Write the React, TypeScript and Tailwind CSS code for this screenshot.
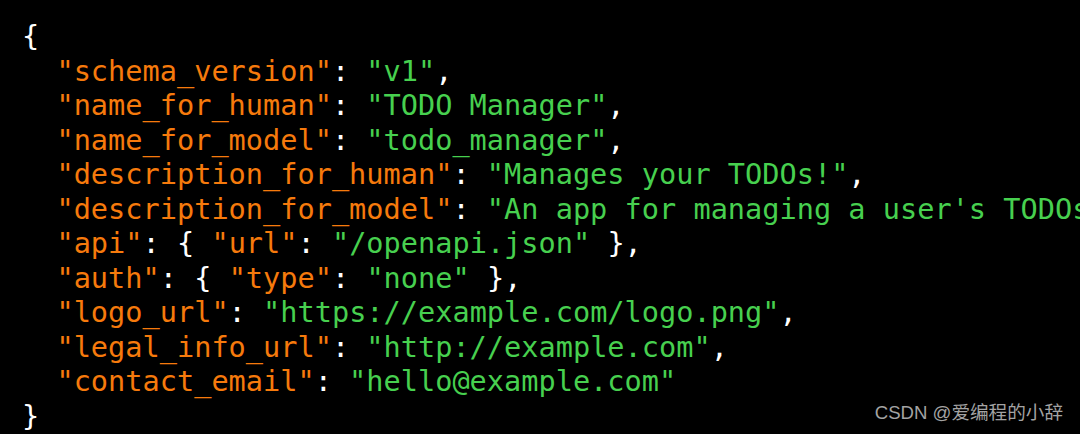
const K = ({ children }: { children: string }) => (
  <span className="text-[#f67a0c]">"{children}"</span>
);
const S = ({ children }: { children: string }) => (
  <span className="text-[#47d04f]">"{children}"</span>
);

const rows: [string, React.ReactNode, string][] = [
  ["schema_version", <S>v1</S>, ","],
  ["name_for_human", <S>TODO Manager</S>, ","],
  ["name_for_model", <S>todo_manager</S>, ","],
  ["description_for_human", <S>Manages your TODOs!</S>, ","],
  ["description_for_model", <S>An app for managing a user's TODOs</S>, ","],
  [
    "api",
    <>
      {"{ "}
      <K>url</K>: <S>/openapi.json</S>
      {" }"}
    </>,
    ",",
  ],
  [
    "auth",
    <>
      {"{ "}
      <K>type</K>: <S>none</S>
      {" }"}
    </>,
    ",",
  ],
  ["logo_url", <S>https://example.com/logo.png</S>, ","],
  ["legal_info_url", <S>http://example.com</S>, ","],
  ["contact_email", <S>hello@example.com</S>, ""],
];

export default function App() {
  return (
    <div className="relative w-[1080px] h-[434px] overflow-hidden bg-black">
      <pre className="pt-[19px] pl-[22px] text-[28.6px] leading-[34.5px] text-white whitespace-pre font-['DejaVu_Sans_Mono',monospace]">
        <div>{"{"}</div>
        {rows.map(([key, value, tail]) => (
          <div key={key}>
            {"  "}
            <K>{key}</K>: {value}
            {tail}
          </div>
        ))}
        <div>{"}"}</div>
      </pre>
      <div className="absolute right-[17px] bottom-[7px] text-[18.6px] text-[#a3a3a3] font-['Liberation_Sans','Noto_Sans_CJK_SC',sans-serif]">
        CSDN @爱编程的小辞
      </div>
    </div>
  );
}
